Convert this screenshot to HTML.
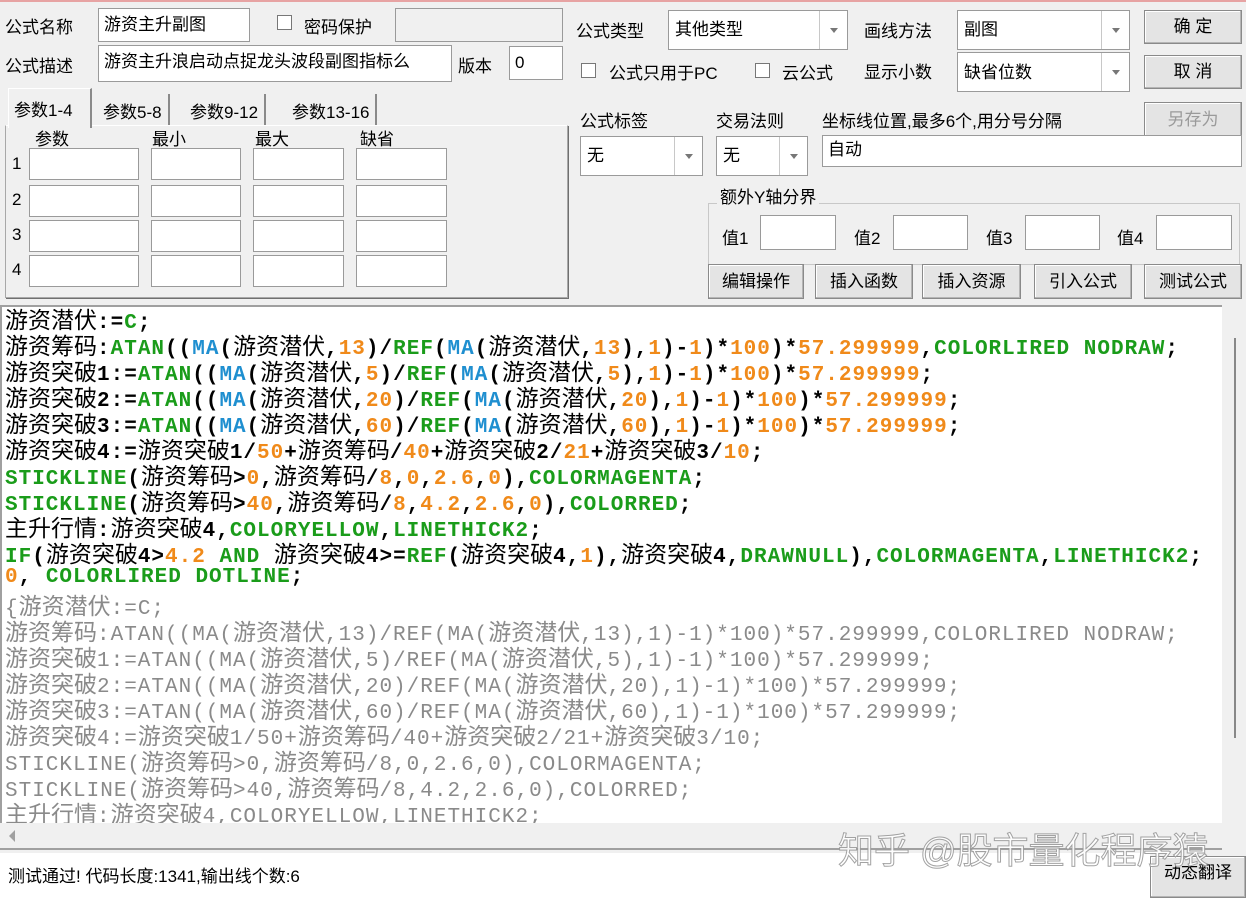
<!DOCTYPE html>
<html><head><meta charset="utf-8">
<style>
*{box-sizing:border-box;margin:0;padding:0}
body{width:1246px;height:898px;overflow:hidden;background:#f0f0f0;font-family:"Liberation Sans","Noto Sans CJK SC",sans-serif;font-size:17px;color:#000;position:relative}
.a{position:absolute;white-space:nowrap}
.in{position:absolute;background:#fff;border:1px solid #9a9a9a;padding:2px 5px;font-size:17px;white-space:nowrap;overflow:hidden;line-height:28px}
.sel{position:absolute;background:#fff;border:1px solid #9a9a9a;font-size:17px;padding-left:6px;white-space:nowrap}
.sel .ar{position:absolute;right:0;top:0;bottom:0;width:28px;border-left:1px solid #c8c8c8;background:#fff}
.sel .ar:after{content:"";position:absolute;left:10px;top:50%;margin-top:-2px;border-left:4px solid transparent;border-right:4px solid transparent;border-top:5px solid #777}
.btn{position:absolute;background:#e4e4e4;border:1px solid #8a8a8a;box-shadow:inset -1px -1px 0 #b5b5b5,inset 1px 1px 0 #fff;text-align:center;font-size:17px}
.cb{position:absolute;width:15px;height:15px;background:#fff;border:1px solid #777}
.pin{position:absolute;background:#fff;border:1px solid #9a9a9a}
#ed{position:absolute;left:0;top:305px;width:1222px;height:518px;background:#fff;border-top:2px solid #a0a0a0;border-left:2px solid #a0a0a0;overflow:hidden}
#code{position:absolute;left:3px;top:-2px;font-family:"Liberation Mono","Noto Sans CJK SC",monospace;font-size:21px;font-weight:bold;letter-spacing:1px}
#code div{height:26px;line-height:26px;white-space:pre}
.h{font-family:"Noto Sans CJK SC",sans-serif;font-size:23px;font-weight:normal;letter-spacing:0}
.g{color:#1a9c1a}.b{color:#1f8fd0}.o{color:#f08a1a}
.gr{color:#8a8a8a;font-weight:normal}
</style></head><body>
<div class="a" style="left:0;top:0;width:1246px;height:2px;background:#e7a3a3"></div>

<div class="a" style="left:5px;top:13px">公式名称</div>
<div class="in" style="left:98px;top:8px;width:152px;height:34px">游资主升副图</div>
<div class="cb" style="left:277px;top:15px"></div>
<div class="a" style="left:304px;top:13px">密码保护</div>
<div class="pin" style="left:395px;top:8px;width:168px;height:34px;background:#f0f0f0"></div>
<div class="a" style="left:5px;top:52px">公式描述</div>
<div class="in" style="left:98px;top:45px;width:354px;height:37px">游资主升浪启动点捉龙头波段副图指标么</div>
<div class="a" style="left:458px;top:52px">版本</div>
<div class="in" style="left:509px;top:46px;width:54px;height:34px">0</div>

<div class="a" style="left:5px;top:125px;width:563px;height:173px;border:1px solid #a8a8a8;border-top-color:#fff;background:#f0f0f0;box-shadow:1px 1px 0 #707070"></div>
<div class="a" style="left:8px;top:88px;width:84px;height:40px;background:#f0f0f0;border:1px solid #fff;border-right:2px solid #8a8a8a;border-bottom:none;padding:7px 5px;font-size:17px">参数1-4</div>
<div class="a" style="left:97px;top:94px;height:31px;border-right:2px solid #8a8a8a;padding:4px 6px">参数5-8</div>
<div class="a" style="left:184px;top:94px;height:31px;border-right:2px solid #8a8a8a;padding:4px 6px">参数9-12</div>
<div class="a" style="left:286px;top:94px;height:31px;border-right:2px solid #8a8a8a;padding:4px 6px">参数13-16</div>
<div class="a" style="left:35px;top:125px">参数</div>
<div class="a" style="left:152px;top:125px">最小</div>
<div class="a" style="left:255px;top:125px">最大</div>
<div class="a" style="left:360px;top:125px">缺省</div>

<div class="a" style="left:12px;top:154px">1</div><div class="a" style="left:12px;top:190px">2</div><div class="a" style="left:12px;top:225px">3</div><div class="a" style="left:12px;top:260px">4</div>
<div class="pin" style="left:29px;top:148px;width:110px;height:32px"></div><div class="pin" style="left:151px;top:148px;width:90px;height:32px"></div><div class="pin" style="left:253px;top:148px;width:91px;height:32px"></div><div class="pin" style="left:356px;top:148px;width:91px;height:32px"></div>
<div class="pin" style="left:29px;top:185px;width:110px;height:32px"></div><div class="pin" style="left:151px;top:185px;width:90px;height:32px"></div><div class="pin" style="left:253px;top:185px;width:91px;height:32px"></div><div class="pin" style="left:356px;top:185px;width:91px;height:32px"></div>
<div class="pin" style="left:29px;top:220px;width:110px;height:32px"></div><div class="pin" style="left:151px;top:220px;width:90px;height:32px"></div><div class="pin" style="left:253px;top:220px;width:91px;height:32px"></div><div class="pin" style="left:356px;top:220px;width:91px;height:32px"></div>
<div class="pin" style="left:29px;top:255px;width:110px;height:32px"></div><div class="pin" style="left:151px;top:255px;width:90px;height:32px"></div><div class="pin" style="left:253px;top:255px;width:91px;height:32px"></div><div class="pin" style="left:356px;top:255px;width:91px;height:32px"></div>

<div class="a" style="left:576px;top:17px">公式类型</div>
<div class="sel" style="left:668px;top:10px;width:180px;height:40px;line-height:38px">其他类型<div class="ar"></div></div>
<div class="a" style="left:864px;top:17px">画线方法</div>
<div class="sel" style="left:957px;top:10px;width:173px;height:40px;line-height:38px">副图<div class="ar"></div></div>
<div class="btn" style="left:1144px;top:10px;width:98px;height:34px;line-height:32px">确 定</div>

<div class="cb" style="left:581px;top:63px"></div>
<div class="a" style="left:609px;top:59px">公式只用于PC</div>
<div class="cb" style="left:755px;top:63px"></div>
<div class="a" style="left:782px;top:59px">云公式</div>
<div class="a" style="left:864px;top:58px">显示小数</div>
<div class="sel" style="left:957px;top:52px;width:173px;height:40px;line-height:40px">缺省位数<div class="ar"></div></div>
<div class="btn" style="left:1144px;top:55px;width:98px;height:34px;line-height:32px">取 消</div>
<div class="btn" style="left:1144px;top:102px;width:98px;height:36px;line-height:34px;color:#9a9a9a">另存为</div>

<div class="a" style="left:580px;top:107px">公式标签</div>
<div class="a" style="left:716px;top:107px">交易法则</div>
<div class="a" style="left:822px;top:107px">坐标线位置,最多6个,用分号分隔</div>
<div class="sel" style="left:580px;top:136px;width:123px;height:40px;line-height:38px">无<div class="ar"></div></div>
<div class="sel" style="left:716px;top:136px;width:92px;height:40px;line-height:38px">无<div class="ar"></div></div>
<div class="in" style="left:822px;top:135px;width:420px;height:32px;line-height:24px">自动</div>

<div class="a" style="left:708px;top:203px;width:532px;height:62px;border:1px solid #c8c8c8"></div>
<div class="a" style="left:717px;top:183px;background:#f0f0f0;padding:0 3px">额外Y轴分界</div>
<div class="a" style="left:722px;top:224px">值1</div><div class="pin" style="left:760px;top:215px;width:76px;height:35px"></div>
<div class="a" style="left:854px;top:224px">值2</div><div class="pin" style="left:893px;top:215px;width:75px;height:35px"></div>
<div class="a" style="left:986px;top:224px">值3</div><div class="pin" style="left:1025px;top:215px;width:75px;height:35px"></div>
<div class="a" style="left:1117px;top:224px">值4</div><div class="pin" style="left:1156px;top:215px;width:76px;height:35px"></div>

<div class="btn" style="left:708px;top:264px;width:96px;height:35px;line-height:33px">编辑操作</div>
<div class="btn" style="left:815px;top:264px;width:98px;height:35px;line-height:33px">插入函数</div>
<div class="btn" style="left:922px;top:264px;width:99px;height:35px;line-height:33px">插入资源</div>
<div class="btn" style="left:1034px;top:264px;width:98px;height:35px;line-height:33px">引入公式</div>
<div class="btn" style="left:1144px;top:264px;width:98px;height:35px;line-height:33px">测试公式</div>

<div id="ed"><div id="code">
<div><span class="h">游资潜伏</span>:=<span class="g">C</span>;</div>
<div><span class="h">游资筹码</span>:<span class="g">ATAN</span>((<span class="b">MA</span>(<span class="h">游资潜伏</span>,<span class="o">13</span>)/<span class="g">REF</span>(<span class="b">MA</span>(<span class="h">游资潜伏</span>,<span class="o">13</span>),<span class="o">1</span>)-<span class="o">1</span>)*<span class="o">100</span>)*<span class="o">57.299999</span>,<span class="g">COLORLIRED NODRAW</span>;</div>
<div><span class="h">游资突破</span>1:=<span class="g">ATAN</span>((<span class="b">MA</span>(<span class="h">游资潜伏</span>,<span class="o">5</span>)/<span class="g">REF</span>(<span class="b">MA</span>(<span class="h">游资潜伏</span>,<span class="o">5</span>),<span class="o">1</span>)-<span class="o">1</span>)*<span class="o">100</span>)*<span class="o">57.299999</span>;</div>
<div><span class="h">游资突破</span>2:=<span class="g">ATAN</span>((<span class="b">MA</span>(<span class="h">游资潜伏</span>,<span class="o">20</span>)/<span class="g">REF</span>(<span class="b">MA</span>(<span class="h">游资潜伏</span>,<span class="o">20</span>),<span class="o">1</span>)-<span class="o">1</span>)*<span class="o">100</span>)*<span class="o">57.299999</span>;</div>
<div><span class="h">游资突破</span>3:=<span class="g">ATAN</span>((<span class="b">MA</span>(<span class="h">游资潜伏</span>,<span class="o">60</span>)/<span class="g">REF</span>(<span class="b">MA</span>(<span class="h">游资潜伏</span>,<span class="o">60</span>),<span class="o">1</span>)-<span class="o">1</span>)*<span class="o">100</span>)*<span class="o">57.299999</span>;</div>
<div><span class="h">游资突破</span>4:=<span class="h">游资突破</span>1/<span class="o">50</span>+<span class="h">游资筹码</span>/<span class="o">40</span>+<span class="h">游资突破</span>2/<span class="o">21</span>+<span class="h">游资突破</span>3/<span class="o">10</span>;</div>
<div><span class="g">STICKLINE</span>(<span class="h">游资筹码</span>&gt;<span class="o">0</span>,<span class="h">游资筹码</span>/<span class="o">8</span>,<span class="o">0</span>,<span class="o">2.6</span>,<span class="o">0</span>),<span class="g">COLORMAGENTA</span>;</div>
<div><span class="g">STICKLINE</span>(<span class="h">游资筹码</span>&gt;<span class="o">40</span>,<span class="h">游资筹码</span>/<span class="o">8</span>,<span class="o">4.2</span>,<span class="o">2.6</span>,<span class="o">0</span>),<span class="g">COLORRED</span>;</div>
<div><span class="h">主升行情</span>:<span class="h">游资突破</span>4,<span class="g">COLORYELLOW</span>,<span class="g">LINETHICK2</span>;</div>
<div><span class="g">IF</span>(<span class="h">游资突破</span>4&gt;<span class="o">4.2</span> <span class="g">AND</span> <span class="h">游资突破</span>4&gt;=<span class="g">REF</span>(<span class="h">游资突破</span>4,<span class="o">1</span>),<span class="h">游资突破</span>4,<span class="g">DRAWNULL</span>),<span class="g">COLORMAGENTA</span>,<span class="g">LINETHICK2</span>;</div>
<div><span class="o">0</span>, <span class="g">COLORLIRED DOTLINE</span>;</div>
<div class="gr">{<span class="h">游资潜伏</span>:=C;</div>
<div class="gr"><span class="h">游资筹码</span>:ATAN((MA(<span class="h">游资潜伏</span>,13)/REF(MA(<span class="h">游资潜伏</span>,13),1)-1)*100)*57.299999,COLORLIRED NODRAW;</div>
<div class="gr"><span class="h">游资突破</span>1:=ATAN((MA(<span class="h">游资潜伏</span>,5)/REF(MA(<span class="h">游资潜伏</span>,5),1)-1)*100)*57.299999;</div>
<div class="gr"><span class="h">游资突破</span>2:=ATAN((MA(<span class="h">游资潜伏</span>,20)/REF(MA(<span class="h">游资潜伏</span>,20),1)-1)*100)*57.299999;</div>
<div class="gr"><span class="h">游资突破</span>3:=ATAN((MA(<span class="h">游资潜伏</span>,60)/REF(MA(<span class="h">游资潜伏</span>,60),1)-1)*100)*57.299999;</div>
<div class="gr"><span class="h">游资突破</span>4:=<span class="h">游资突破</span>1/50+<span class="h">游资筹码</span>/40+<span class="h">游资突破</span>2/21+<span class="h">游资突破</span>3/10;</div>
<div class="gr">STICKLINE(<span class="h">游资筹码</span>&gt;0,<span class="h">游资筹码</span>/8,0,2.6,0),COLORMAGENTA;</div>
<div class="gr">STICKLINE(<span class="h">游资筹码</span>&gt;40,<span class="h">游资筹码</span>/8,4.2,2.6,0),COLORRED;</div>
<div class="gr"><span class="h">主升行情</span>:<span class="h">游资突破</span>4,COLORYELLOW,LINETHICK2;</div>
</div></div>
<div class="a" style="left:1222px;top:305px;width:24px;height:518px;background:#f0f0f0"></div>
<div class="a" style="left:1234px;top:338px;width:2px;height:400px;background:#888"></div>
<div class="a" style="left:0;top:823px;width:1222px;height:27px;background:#f0f0f0;border-bottom:2px solid #a0a0a0"></div>
<div class="a" style="left:9px;top:830px;border-top:6px solid transparent;border-bottom:6px solid transparent;border-right:6px solid #a0a0a0"></div>
<div class="a" style="left:0;top:853px;width:1150px;height:45px;background:#fff"></div>
<div class="a" style="left:8px;top:862px;font-size:17px">测试通过! 代码长度:1341,输出线个数:6</div>
<div class="btn" style="left:1150px;top:856px;width:96px;height:42px;line-height:32px">动态翻译</div>
<div class="a" style="left:838px;top:822px;font-size:36px;color:#fff;-webkit-text-stroke:1px #9a9a9a;opacity:.9">知乎 @股市量化程序猿</div>
</body></html>
